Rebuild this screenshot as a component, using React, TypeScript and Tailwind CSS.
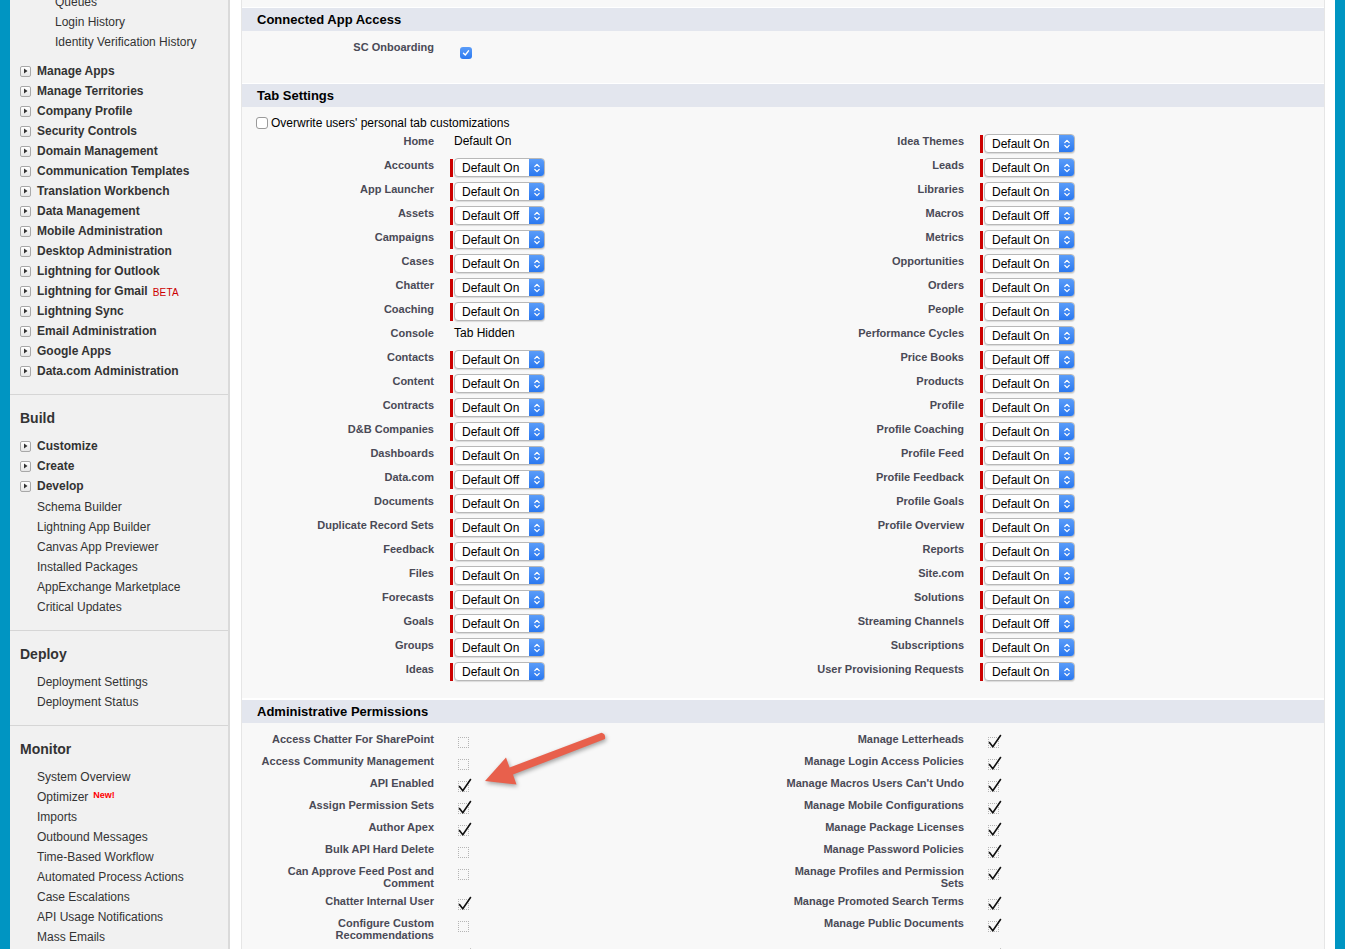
import React from "react";

type Tab = { label: string; value: string; plain?: boolean };
type Perm = { label: string; on: boolean };

const tabsLeft: Tab[] = [
  { label: "Home", value: "Default On", plain: true },
  { label: "Accounts", value: "Default On" },
  { label: "App Launcher", value: "Default On" },
  { label: "Assets", value: "Default Off" },
  { label: "Campaigns", value: "Default On" },
  { label: "Cases", value: "Default On" },
  { label: "Chatter", value: "Default On" },
  { label: "Coaching", value: "Default On" },
  { label: "Console", value: "Tab Hidden", plain: true },
  { label: "Contacts", value: "Default On" },
  { label: "Content", value: "Default On" },
  { label: "Contracts", value: "Default On" },
  { label: "D&B Companies", value: "Default Off" },
  { label: "Dashboards", value: "Default On" },
  { label: "Data.com", value: "Default Off" },
  { label: "Documents", value: "Default On" },
  { label: "Duplicate Record Sets", value: "Default On" },
  { label: "Feedback", value: "Default On" },
  { label: "Files", value: "Default On" },
  { label: "Forecasts", value: "Default On" },
  { label: "Goals", value: "Default On" },
  { label: "Groups", value: "Default On" },
  { label: "Ideas", value: "Default On" },
];

const tabsRight: Tab[] = [
  { label: "Idea Themes", value: "Default On" },
  { label: "Leads", value: "Default On" },
  { label: "Libraries", value: "Default On" },
  { label: "Macros", value: "Default Off" },
  { label: "Metrics", value: "Default On" },
  { label: "Opportunities", value: "Default On" },
  { label: "Orders", value: "Default On" },
  { label: "People", value: "Default On" },
  { label: "Performance Cycles", value: "Default On" },
  { label: "Price Books", value: "Default Off" },
  { label: "Products", value: "Default On" },
  { label: "Profile", value: "Default On" },
  { label: "Profile Coaching", value: "Default On" },
  { label: "Profile Feed", value: "Default On" },
  { label: "Profile Feedback", value: "Default On" },
  { label: "Profile Goals", value: "Default On" },
  { label: "Profile Overview", value: "Default On" },
  { label: "Reports", value: "Default On" },
  { label: "Site.com", value: "Default On" },
  { label: "Solutions", value: "Default On" },
  { label: "Streaming Channels", value: "Default Off" },
  { label: "Subscriptions", value: "Default On" },
  { label: "User Provisioning Requests", value: "Default On" },
];

const permsLeft: Perm[] = [
  { label: "Access Chatter For SharePoint", on: false },
  { label: "Access Community Management", on: false },
  { label: "API Enabled", on: true },
  { label: "Assign Permission Sets", on: true },
  { label: "Author Apex", on: true },
  { label: "Bulk API Hard Delete", on: false },
  { label: "Can Approve Feed Post and Comment", on: false },
  { label: "Chatter Internal User", on: true },
  { label: "Configure Custom Recommendations", on: false },
  { label: "Customize Application", on: true },
];

const permsRight: Perm[] = [
  { label: "Manage Letterheads", on: true },
  { label: "Manage Login Access Policies", on: true },
  { label: "Manage Macros Users Can't Undo", on: true },
  { label: "Manage Mobile Configurations", on: true },
  { label: "Manage Package Licenses", on: true },
  { label: "Manage Password Policies", on: true },
  { label: "Manage Profiles and Permission Sets", on: true },
  { label: "Manage Promoted Search Terms", on: true },
  { label: "Manage Public Documents", on: true },
  { label: "Manage Public List Views", on: true },
];

const adminItems = [
  "Manage Apps",
  "Manage Territories",
  "Company Profile",
  "Security Controls",
  "Domain Management",
  "Communication Templates",
  "Translation Workbench",
  "Data Management",
  "Mobile Administration",
  "Desktop Administration",
  "Lightning for Outlook",
  "Lightning for Gmail",
  "Lightning Sync",
  "Email Administration",
  "Google Apps",
  "Data.com Administration",
];

const buildLinks = [
  "Schema Builder",
  "Lightning App Builder",
  "Canvas App Previewer",
  "Installed Packages",
  "AppExchange Marketplace",
  "Critical Updates",
];

const monitorLinks = [
  "System Overview",
  "Optimizer",
  "Imports",
  "Outbound Messages",
  "Time-Based Workflow",
  "Automated Process Actions",
  "Case Escalations",
  "API Usage Notifications",
  "Mass Emails",
];

function Twisty() {
  return (
    <span className="mr-[6px] flex h-[11px] w-[11px] items-center justify-center rounded-[2px] border border-[#a8a8a8] bg-gradient-to-b from-white to-[#e6e6e6]">
      <svg width="5" height="6" viewBox="0 0 5 6">
        <path d="M1 0.5 L4.5 3 L1 5.5 Z" fill="#333" />
      </svg>
    </span>
  );
}

function NavGroup({ label, children }: { label: string; children?: React.ReactNode }) {
  return (
    <div className="flex h-[20px] items-center pl-[10px] text-[12px] font-bold text-[#333]">
      <Twisty />
      {label}
      {children}
    </div>
  );
}

function NavLink({ label, indent = "pl-[27px]", children }: { label: string; indent?: string; children?: React.ReactNode }) {
  return (
    <div className={`flex h-[20px] items-center text-[12px] text-[#333] ${indent}`}>
      {label}
      {children}
    </div>
  );
}

function NavSection({ title, children }: { title: string; children: React.ReactNode }) {
  return (
    <div className="border-t border-[#d6d6d6] pb-[13px] pt-[13px]">
      <div className="mb-[8px] h-[20px] pl-[10px] text-[14px] font-bold leading-[20px] text-[#333]">{title}</div>
      {children}
    </div>
  );
}

function Sidebar() {
  return (
    <aside className="w-[220px] shrink-0 border-r-2 border-[#dadada] bg-[#f1f1f1]">
      <div className="-mt-[8px] pb-[13px]">
        <NavLink label="Queues" indent="pl-[45px]" />
        <NavLink label="Login History" indent="pl-[45px]" />
        <NavLink label="Identity Verification History" indent="pl-[45px]" />
        <div className="mt-[9px]">
          {adminItems.map((item) => (
            <NavGroup key={item} label={item}>
              {item === "Lightning for Gmail" && (
                <span className="ml-[5px] mt-[2px] text-[10px] font-normal tracking-wide text-[#cc0000]">BETA</span>
              )}
            </NavGroup>
          ))}
        </div>
      </div>
      <NavSection title="Build">
        <NavGroup label="Customize" />
        <NavGroup label="Create" />
        <NavGroup label="Develop" />
        <div className="mt-[1px]">
          {buildLinks.map((l) => (
            <NavLink key={l} label={l} />
          ))}
        </div>
      </NavSection>
      <NavSection title="Deploy">
        <NavLink label="Deployment Settings" />
        <NavLink label="Deployment Status" />
      </NavSection>
      <NavSection title="Monitor">
        {monitorLinks.map((l) => (
          <NavLink key={l} label={l}>
            {l === "Optimizer" && (
              <span className="mb-[2px] ml-[5px] text-[9px] font-bold text-[#ff0000]">New!</span>
            )}
          </NavLink>
        ))}
      </NavSection>
    </aside>
  );
}

function Select({ value }: { value: string }) {
  return (
    <div className="flex items-center">
      <div className="h-[18px] w-[3px] bg-[#cc0000]" />
      <div className="ml-[1px] flex h-[19px] w-[91px] overflow-hidden rounded-[4px] border border-[#b8b8b8] bg-white shadow-[0_1px_1px_rgba(0,0,0,0.12)]">
        <span className="flex-1 pl-[7px] text-[12px] leading-[18px] text-black">{value}</span>
        <span className="flex w-[15px] items-center justify-center bg-gradient-to-b from-[#5a9cf8] to-[#2a78f0]">
          <svg width="8" height="12" viewBox="0 0 8 12" fill="none" stroke="white" strokeWidth="1.3" strokeLinecap="round" strokeLinejoin="round">
            <path d="M1.8 4.6 L4 2.4 L6.2 4.6" />
            <path d="M1.8 7.4 L4 9.6 L6.2 7.4" />
          </svg>
        </span>
      </div>
    </div>
  );
}

function TabCell({ tab }: { tab: Tab }) {
  return (
    <div className="flex w-[530px] items-start">
      <div className="w-[178px] pt-[2px] text-right text-[11px] font-bold leading-[14px] text-[#4a4a56]">{tab.label}</div>
      <div className="ml-[16px] pt-[2px]">
        {tab.plain ? (
          <span className="block pl-[4px] text-[12px] leading-[14px] text-black">{tab.value}</span>
        ) : (
          <Select value={tab.value} />
        )}
      </div>
    </div>
  );
}

function PermBox({ on }: { on: boolean }) {
  return (
    <span className="relative mt-[4px] block h-[11px] w-[11px] border border-dotted border-[#b5b5b5]">
      {on && (
        <svg className="absolute -left-[1px] -top-[4px]" width="14" height="15" viewBox="0 0 14 15" fill="none">
          <path d="M1.5 8.5 L4.8 12.8 L12.5 1.5" stroke="#111" strokeWidth="1.6" strokeLinecap="round" strokeLinejoin="round" />
        </svg>
      )}
    </span>
  );
}

function PermCell({ perm }: { perm: Perm }) {
  return (
    <div className="flex w-[530px] items-start">
      <div className="w-[178px] text-right text-[11px] font-bold leading-[12px] text-[#4a4a56]">{perm.label}</div>
      <div className="ml-[24px]">
        <PermBox on={perm.on} />
      </div>
    </div>
  );
}

function SectionHeader({ title }: { title: string }) {
  return (
    <div className="flex h-[23px] items-center bg-[#e3e6ee] pl-[15px] text-[13px] font-bold text-black">{title}</div>
  );
}

function Arrow() {
  return (
    <svg
      className="pointer-events-none absolute left-[470px] top-[720px] drop-shadow-[1px_2px_2px_rgba(0,0,0,0.35)]"
      width="150"
      height="80"
      viewBox="470 720 150 80"
    >
      <path
        d="M601.5 732.8 Q606 734 605 739 L513 774.6 L516.5 784.5 L485 781 L506 757.5 L509.6 767.6 Z"
        fill="#e8604c"
      />
    </svg>
  );
}

export default function App() {
  return (
    <div className="relative flex h-[949px] w-[1345px] overflow-hidden bg-white font-['Liberation_Sans',Arial,sans-serif]">
      <div className="w-[10px] shrink-0 bg-[#0095c2]" />
      <Sidebar />
      <div className="w-[11px] shrink-0" />
      <main className="w-[1084px] shrink-0 border-l border-r border-[#e6e6e6] bg-[#f8f8f8]">
        <div className="h-[7px]" />
        <section className="border-t border-white">
          <SectionHeader title="Connected App Access" />
          <div className="flex h-[52px] items-start pl-[14px] pt-[9px]">
            <div className="w-[178px] text-right text-[11px] font-bold leading-[14px] text-[#4a4a56]">SC Onboarding</div>
            <span className="ml-[26px] mt-[7px] flex h-[12px] w-[12px] items-center justify-center rounded-[3px] bg-gradient-to-b from-[#5a9cf8] to-[#2a78f0]">
              <svg width="8" height="8" viewBox="0 0 8 8" fill="none">
                <path d="M1.5 4.2 L3.3 6 L6.5 1.8" stroke="white" strokeWidth="1.4" strokeLinecap="round" strokeLinejoin="round" />
              </svg>
            </span>
          </div>
        </section>
        <section className="border-t border-white">
          <SectionHeader title="Tab Settings" />
          <div className="pb-[14px] pl-[14px] pt-[8px]">
            <div className="flex h-[17px] items-start pt-[1px]">
              <span className="mt-[1px] h-[12px] w-[12px] rounded-[3px] border border-[#9a9a9a] bg-white" />
              <span className="ml-[3px] text-[12px] leading-[14px] text-black">Overwrite users' personal tab customizations</span>
            </div>
            {tabsLeft.map((t, i) => (
              <div key={t.label} className="flex h-[24px]">
                <TabCell tab={t} />
                <TabCell tab={tabsRight[i]} />
              </div>
            ))}
          </div>
        </section>
        <section className="border-t-2 border-white">
          <SectionHeader title="Administrative Permissions" />
          <div className="pl-[14px] pt-[7px]">
            {permsLeft.map((p, i) => (
              <div key={p.label} className="flex min-h-[22px] py-[3px]">
                <PermCell perm={p} />
                <PermCell perm={permsRight[i]} />
              </div>
            ))}
          </div>
        </section>
      </main>
      <div className="w-[10px] shrink-0" />
      <div className="w-[10px] shrink-0 bg-[#0095c2]" />
      <Arrow />
    </div>
  );
}
